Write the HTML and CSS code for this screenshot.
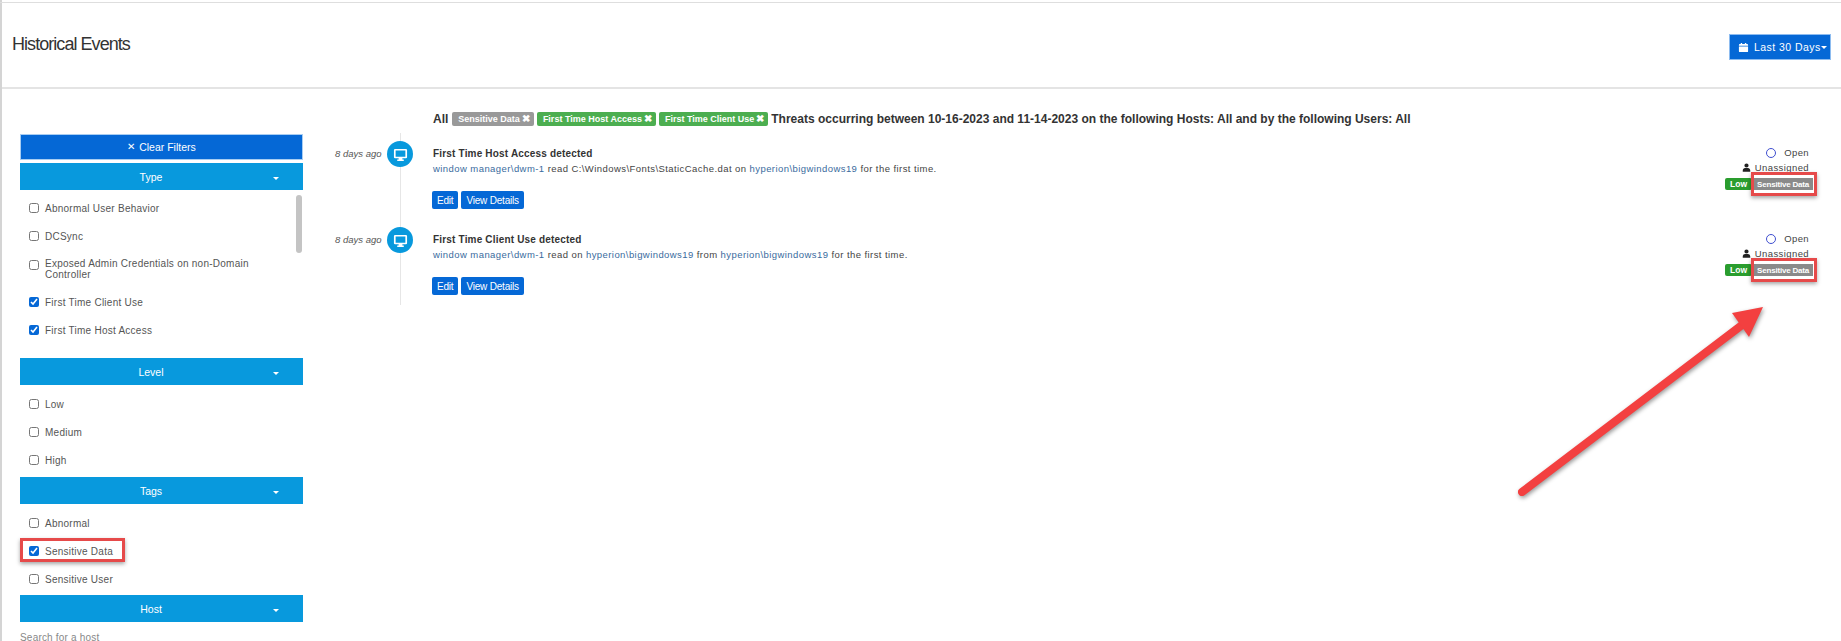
FILE: index.html
```html
<!DOCTYPE html>
<html lang="en">
<head>
<meta charset="utf-8">
<title>Historical Events</title>
<link rel="stylesheet" href="styles.css">
</head>
<body>
<div class="page">
  <header class="header">
    <h1 class="title">Historical Events</h1>
    <button class="range-btn">
      <svg class="cal" viewBox="0 0 12 12"><path d="M1 3.2a1 1 0 0 1 1-1h1V1h1.5v1.2h3V1H9v1.2h1a1 1 0 0 1 1 1V4H1zM1 4.8h10V10a1 1 0 0 1-1 1H2a1 1 0 0 1-1-1z" fill="#fff"/></svg>
      <span>Last 30 Days</span><i class="caret small"></i>
    </button>
  </header>
  <div class="body">
    <aside class="sidebar">
      <button class="clear-btn"><span class="x">✕</span> Clear Filters</button>
      <div class="band"><span>Type</span><i class="caret"></i></div>
      <div class="list list-type">
        <div class="scroll"></div>
        <label class="opt"><input type="checkbox"><span>Abnormal User Behavior</span></label>
        <label class="opt"><input type="checkbox"><span>DCSync</span></label>
        <label class="opt opt-two"><input type="checkbox"><span>Exposed Admin Credentials on non-Domain Controller</span></label>
        <label class="opt"><input type="checkbox" checked><span>First Time Client Use</span></label>
        <label class="opt"><input type="checkbox" checked><span>First Time Host Access</span></label>
      </div>
      <div class="band"><span>Level</span><i class="caret"></i></div>
      <div class="list">
        <label class="opt"><input type="checkbox"><span>Low</span></label>
        <label class="opt"><input type="checkbox"><span>Medium</span></label>
        <label class="opt"><input type="checkbox"><span>High</span></label>
      </div>
      <div class="band"><span>Tags</span><i class="caret"></i></div>
      <div class="list list-tags">
        <label class="opt"><input type="checkbox"><span>Abnormal</span></label>
        <label class="opt marked"><input type="checkbox" checked><span>Sensitive Data</span></label>
        <label class="opt"><input type="checkbox"><span>Sensitive User</span></label>
      </div>
      <div class="band"><span>Host</span><i class="caret"></i></div>
      <div class="search">Search for a host</div>
    </aside>
    <main class="main">
      <div class="summary">
        <span>All</span>
        <span class="chip gray">Sensitive Data <b>✖</b></span>
        <span class="chip green">First Time Host Access <b>✖</b></span>
        <span class="chip green">First Time Client Use <b>✖</b></span>
        <span>Threats occurring between 10-16-2023 and 11-14-2023 on the following Hosts: All and by the following Users: All</span>
      </div>
      <div class="timeline">
        <article class="event">
          <div class="when">8 days ago</div>
          <div class="dot"><svg viewBox="0 0 16 16"><path d="M2.2 2h11.6A1.2 1.2 0 0 1 15 3.2v7.6a1.2 1.2 0 0 1-1.2 1.2H10v1.4h1.5V15h-7v-1.6H6V12H2.2A1.2 1.2 0 0 1 1 10.800V3.200A1.200 1.200 0 0 1 2.200 2zM2.800 3.600v6.800h10.400V3.600z" fill="#fff" fill-rule="evenodd"/></svg></div>
          <div class="content">
            <h2 class="ev-title">First Time Host Access detected</h2>
            <p class="ev-desc"><a>window manager\dwm-1</a> read C:\Windows\Fonts\StaticCache.dat on <a>hyperion\bigwindows19</a> for the first time.</p>
            <div class="actions"><button class="act">Edit</button><button class="act">View Details</button></div>
          </div>
          <div class="meta">
            <div class="meta-line"><span class="ring"></span><span class="open">Open</span></div>
            <div class="meta-line"><svg class="user" viewBox="0 0 12 12"><path d="M6 .5a2.800 2.800 0 1 1 0 5.600 2.800 2.800 0 0 1 0-5.600zM1 11.500V10c0-2 1.600-3.200 3-3.200h4c1.400 0 3 1.200 3 3.200v1.500z" fill="#222"/></svg><span>Unassigned</span></div>
            <div class="tags"><span class="low">Low</span><span class="sens">Sensitive Data</span></div>
          </div>
        </article>
        <article class="event">
          <div class="when">8 days ago</div>
          <div class="dot"><svg viewBox="0 0 16 16"><path d="M2.2 2h11.6A1.2 1.2 0 0 1 15 3.2v7.6a1.2 1.2 0 0 1-1.2 1.2H10v1.4h1.5V15h-7v-1.6H6V12H2.2A1.2 1.2 0 0 1 1 10.800V3.200A1.200 1.200 0 0 1 2.200 2zM2.800 3.600v6.800h10.400V3.600z" fill="#fff" fill-rule="evenodd"/></svg></div>
          <div class="content">
            <h2 class="ev-title">First Time Client Use detected</h2>
            <p class="ev-desc"><a>window manager\dwm-1</a> read on <a>hyperion\bigwindows19</a> from <a>hyperion\bigwindows19</a> for the first time.</p>
            <div class="actions"><button class="act">Edit</button><button class="act">View Details</button></div>
          </div>
          <div class="meta">
            <div class="meta-line"><span class="ring"></span><span class="open">Open</span></div>
            <div class="meta-line"><svg class="user" viewBox="0 0 12 12"><path d="M6 .5a2.800 2.800 0 1 1 0 5.600 2.800 2.800 0 0 1 0-5.600zM1 11.500V10c0-2 1.600-3.200 3-3.200h4c1.400 0 3 1.200 3 3.200v1.500z" fill="#222"/></svg><span>Unassigned</span></div>
            <div class="tags"><span class="low">Low</span><span class="sens">Sensitive Data</span></div>
          </div>
        </article>
      </div>
    </main>
  </div>
  <svg class="arrow" viewBox="0 0 300 220">
    <path d="M42 202 L262 35" class="shaft"/>
    <path d="M283 17 L252 23 L269 47 Z" class="head"/>
  </svg>
</div>
</body>
</html>
```

FILE: styles.css
```css
* { box-sizing: border-box; }
html, body { margin: 0; height: 641px; overflow: hidden; background: #fff; }
body { font-family: "Liberation Sans", Arial, sans-serif; color: #333; }
.page { position: relative; height: 641px; border-left: 2px solid #d4d4d4; padding-top: 2px; background: #fff; }
.page::before { content: ""; position: absolute; left: -2px; right: 0; top: 2px; height: 1px; background: #dedede; }

.header { display: flex; justify-content: space-between; align-items: center; height: 87px; border-bottom: 2px solid #e4e4e4; padding: 0 10px 0 10px; }
.title { margin: 0; font-size: 18px; font-weight: 400; letter-spacing: -.95px; color: #333; }
.range-btn { display: flex; align-items: center; gap: 5px; width: 102px; height: 26px; margin-top: 5px; padding: 0 0 0 8px; border: 1px solid #8dbcf0; background: #0568d6; color: #fff; font: 10.5px "Liberation Sans", Arial, sans-serif; letter-spacing: .45px; }
.cal { width: 11px; height: 11px; }
.caret { display: inline-block; width: 0; height: 0; border-left: 3.5px solid transparent; border-right: 3.5px solid transparent; border-top: 3.5px solid #fff; }
.caret.small { margin-left: -5px; border-left-width: 3px; border-right-width: 3px; border-top-width: 3px; }

.body { display: flex; height: 552px; }
.sidebar { width: 322px; flex: none; padding: 45px 21px 0 18px; }
.clear-btn { display: block; width: 283px; height: 26px; margin-bottom: 3px; border: 1px solid #a8cdf2; background: #0568d6; color: #fff; font: 10.5px "Liberation Sans", Arial, sans-serif; }
.clear-btn .x { font-size: 10px; margin-right: 1px; position: relative; top: -1px; }
.band { position: relative; display: flex; align-items: center; justify-content: center; width: 283px; height: 27px; padding-right: 21px; background: #0899dd; color: #fff; font-size: 10.5px; }
.band .caret { position: absolute; right: 24px; top: 14px; }

.list { position: relative; padding: 5px 0 3px; }
.list-type { padding: 4px 0 14px; }
.list-tags { padding-bottom: 2px; }
.scroll { position: absolute; right: 1px; top: 5px; width: 6px; height: 58px; border-radius: 3px; background: #c4c4c4; }
.opt { display: flex; align-items: center; gap: 6px; min-height: 28px; padding-left: 9px; padding-right: 30px; font-size: 10px; letter-spacing: .25px; line-height: 11px; color: #555; }
.opt input { width: 10px; height: 10px; margin: 0; flex: none; accent-color: #0568d6; }
.opt-two { min-height: 38px; align-items: flex-start; padding-top: 8px; }
.opt-two input { margin-top: 2px; }
.marked { position: relative; }
.marked::after { content: ""; position: absolute; left: 0; top: 1px; width: 99px; height: 18px; border: 3px solid #e64a4a; box-shadow: 0 2px 4px rgba(0,0,0,.35); }
.search { margin-top: 10px; font-size: 10px; letter-spacing: .2px; color: #888; }

.main { flex: 1; min-width: 0; padding-top: 17px; padding-left: 11px; }
.summary { display: flex; align-items: center; gap: 3px; height: 26px; margin-bottom: 1px; padding-left: 98px; font-size: 12px; font-weight: 700; color: #333; white-space: nowrap; }
.summary > span:first-child { margin-right: 1px; }
.chip { display: inline-flex; align-items: center; height: 14px; padding: 0 5px 0 6px; border-radius: 2px; color: #fff; font-size: 9px; }
.chip b { display: inline-block; width: 7px; margin-left: 2px; font-size: 9.5px; line-height: 14px; }
.chip.gray { background: #999; }
.chip.green { background: #4cae50; }

.timeline { position: relative; }
.timeline::before { content: ""; position: absolute; left: 65px; top: 0; bottom: 0; width: 1px; background: #e6e6e6; }
.event { position: relative; display: grid; grid-template-columns: 45px 26px 1fr auto; height: 86px; padding-top: 8px; }
.when { padding-top: 7px; font-size: 9.5px; font-style: italic; color: #555; white-space: nowrap; text-align: right; }
.dot { position: relative; width: 26px; height: 26px; margin-left: 7px; border-radius: 50%; background: #0899dd; display: flex; align-items: center; justify-content: center; }
.dot svg { width: 15px; height: 15px; }
.content { padding-left: 27px; }
.ev-title { margin: 7px 0 0; font-size: 10px; font-weight: 700; letter-spacing: .18px; line-height: 12px; color: #333; }
.ev-desc { margin: 3px 0 0; font-size: 9.5px; letter-spacing: .43px; line-height: 11px; color: #444; white-space: nowrap; }
.ev-desc a { color: #3a6b9e; }
.actions { display: flex; gap: 3px; margin-top: 17px; margin-left: -1px; }
.act { height: 18px; padding: 0 5px; border: 0; border-radius: 2px; background: #0568d6; color: #fff; font: 10px "Liberation Sans", Arial, sans-serif; letter-spacing: -.2px; }

.meta { display: flex; flex-direction: column; align-items: flex-end; padding-top: 4px; padding-right: 32px; font-size: 9.5px; letter-spacing: .4px; color: #444; }
.meta-line { display: flex; align-items: center; gap: 4px; height: 15px; }
.ring { width: 10px; height: 10px; border-radius: 50%; border: 1px solid #3f4fd0; margin-right: 4px; }
.user { width: 9px; height: 9px; }
.tags { position: relative; display: flex; gap: 2px; margin-top: 3px; margin-right: -4px; }
.low { display: flex; align-items: center; height: 12px; padding: 0 5px; border-radius: 2px; background: #2a9d2e; color: #fff; font-size: 8.5px; font-weight: 700; letter-spacing: 0; }
.sens { position: relative; display: flex; align-items: center; height: 12px; padding: 0 4px 0 3px; background: #8a8a8a; color: #fff; font-size: 8px; font-weight: 700; letter-spacing: -.2px; }
.sens::after { content: ""; position: absolute; left: -3px; right: -4px; top: -6px; bottom: -6px; border: 3px solid #e64a4a; box-shadow: 0 2px 4px rgba(0,0,0,.35); }

.arrow { position: absolute; left: 1478px; top: 290px; width: 300px; height: 220px; overflow: visible; filter: drop-shadow(1px 2px 2px rgba(0,0,0,.4)); }
.shaft { stroke: #f34040; stroke-width: 8; stroke-linecap: round; fill: none; }
.head { fill: #f34040; }
```
